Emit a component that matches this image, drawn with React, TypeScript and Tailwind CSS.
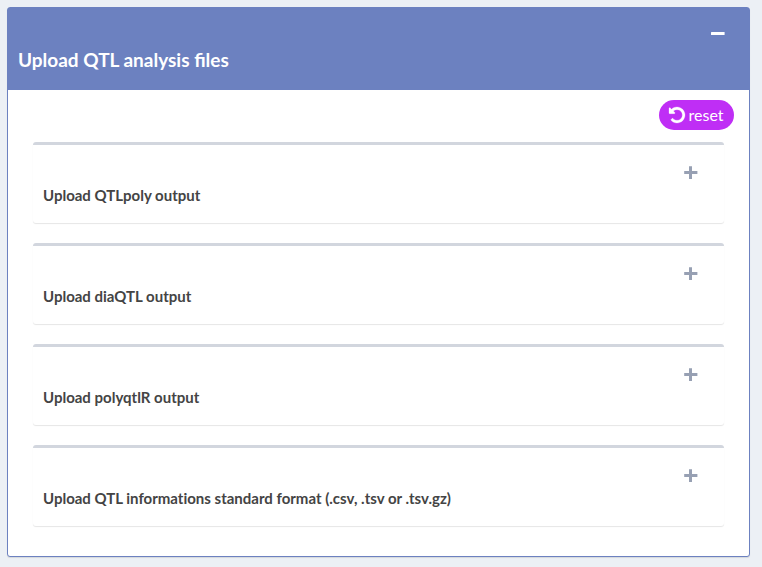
const sections = [
  "Upload QTLpoly output",
  "Upload diaQTL output",
  "Upload polyqtlR output",
  "Upload QTL informations standard format (.csv, .tsv or .tsv.gz)",
];

function Undo() {
  return (
    <svg width="16" height="16" viewBox="0 128 1536 1536" fill="currentColor" stroke="currentColor" strokeWidth="25" overflow="visible">
      <path d="M1536 896q0 156-61 298t-164 245-245 164-298 61q-172 0-327-72.500t-264-204.500q-7-10-6.500-22.500t8.500-20.500l137-138q10-9 25-9 16 2 23 12 73 95 179 147t225 52q104 0 198.500-40.500t163.500-109.500 109.500-163.500 40.500-198.500-40.500-198.500-109.500-163.500-163.500-109.500-198.500-40.500q-98 0-188 35.500t-160 101.500l137 138q31 30 14 69-17 40-59 40h-448q-26 0-45-19t-19-45v-448q0-42 40-59 39-17 69 14l130 129q107-101 244.500-156.500t284.500-55.500q156 0 298 61t245 164 164 245 61 298z" />
    </svg>
  );
}

function Minus() {
  return (
    <svg width="14" height="14" viewBox="0 0 14 14" fill="currentColor">
      <rect x="0" y="5" width="13.6" height="3" rx="0.5" />
    </svg>
  );
}

function Plus() {
  return (
    <svg width="14" height="14" viewBox="0 0 14 14" fill="currentColor">
      <path d="M0.2 5H5V0.2H8V5H13.400V8H8V13H5V8H0.200Z" />
    </svg>
  );
}

export default function App() {
  return (
    <div className="h-[567px] w-[762px] overflow-hidden bg-[#ecf0f5] pt-[7px] pl-[7px] font-['Lato',sans-serif]">
      <section className="h-[550px] w-[743px] rounded-[3px] border border-[#6c81c0] bg-white shadow-[0_1px_1px_rgba(0,0,0,0.1)]">
        <header className="flex h-[82px] justify-between bg-[#6c81c0] text-white">
          <h3 className="pt-[40px] pl-[10px] text-[19px] leading-[24px] font-bold">Upload QTL analysis files</h3>
          <button className="mt-[19px] mr-[24px] h-[14px]" aria-label="Collapse">
            <Minus />
          </button>
        </header>
        <div className="flex justify-end pt-[10px] pr-[15px]">
          <button className="flex h-[30px] w-[75px] items-center gap-[3.6px] rounded-full bg-[#bf2ef5] pl-[10px] text-[16px] text-white">
            <Undo />
            <span>reset</span>
          </button>
        </div>
        <div className="flex flex-col gap-5 px-[25px] pt-[12px]">
          {sections.map((title) => (
            <div key={title} className="flex h-[81px] justify-between rounded-[3px] border-t-[3px] border-[#d2d6de] shadow-[0_1px_1px_rgba(0,0,0,0.1)]">
              <h3 className="pt-[40px] pl-[10px] text-[15px] leading-[20px] font-bold text-[#444] [font-variant-ligatures:none]">{title}</h3>
              <button className="mt-[21px] mr-[26px] h-[14px] text-[#97a0b3]" aria-label="Expand">
                <Plus />
              </button>
            </div>
          ))}
        </div>
      </section>
    </div>
  );
}
